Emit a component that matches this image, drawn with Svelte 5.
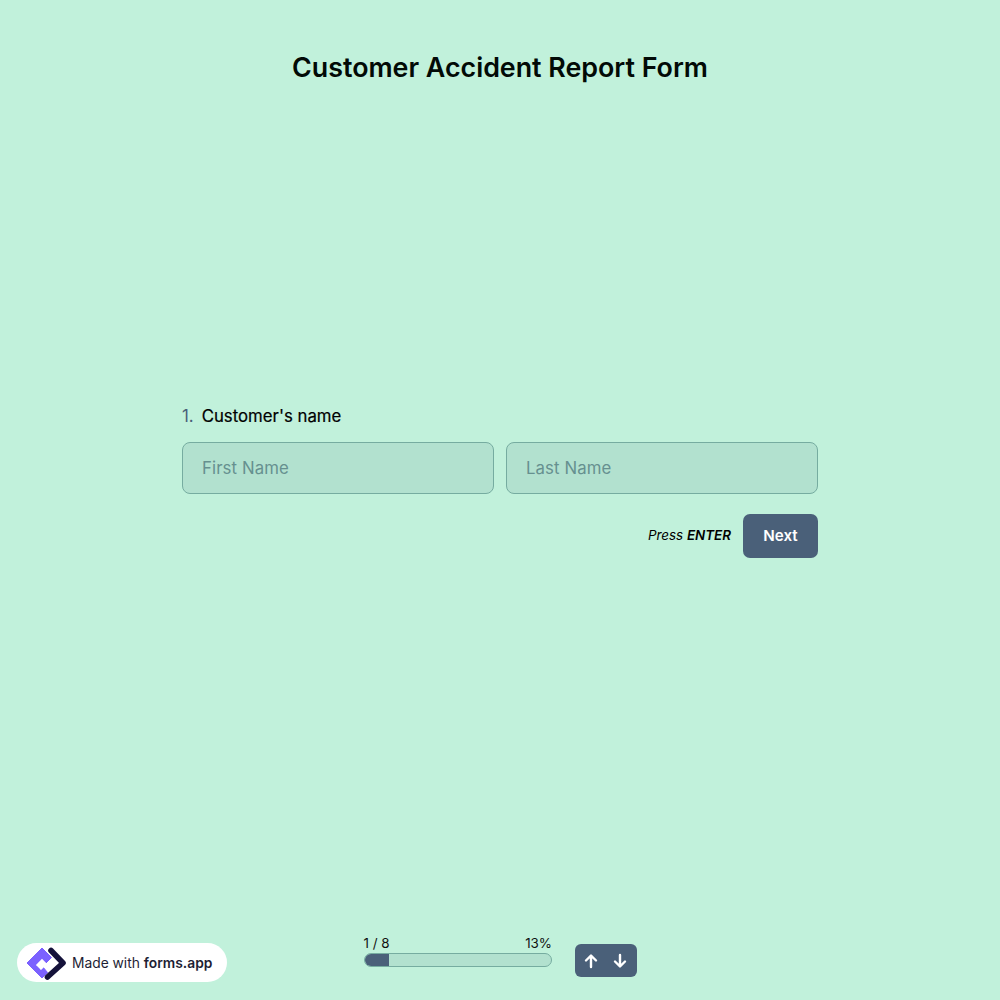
<script>
  const fields = ['First Name', 'Last Name'];
</script>

<div class="page">
  <header class="title">Customer Accident Report Form</header>

  <main class="stage">
    <section class="question">
      <div class="label"><span class="num">1.</span><span>Customer's name</span></div>
      <div class="fields">
        {#each fields as f}
          <input class="field" placeholder={f} />
        {/each}
      </div>
      <div class="actions">
        <span class="hint">Press <b>ENTER</b></span>
        <button class="next">Next</button>
      </div>
    </section>
  </main>

  <footer class="footer">
    <div class="brand">
      <svg class="logo" width="42" height="36" viewBox="0 0 42 36">
        <path d="M1 18 L16 3 L25.5 12.5 L20 18 L16.5 21.5 L21.5 27.5 L16 33 Z" fill="#7b61ff" stroke="#7b61ff" stroke-width="1" stroke-linejoin="round"/>
        <path d="M10.5 20.5 L16 15 L20 19 L14.5 24.5" fill="#fff" stroke="#fff" stroke-width="1.6"/>
        <path d="M25 5.5 L37 18 L21.5 32" fill="none" stroke="#14123a" stroke-width="5.6" stroke-linejoin="round" stroke-linecap="round"/>
      </svg>
      <span class="made">Made with <b>forms.app</b></span>
    </div>
    <div class="progress">
      <div class="ptext"><span>1 / 8</span><span>13%</span></div>
      <div class="track"><div class="fill" style="width: 13%"></div></div>
    </div>
    <div class="arrows">
      <svg width="16" height="16" viewBox="0 0 16 16"><path d="M8 14V3M3 7.5L8 2.5L13 7.5" fill="none" stroke="#fff" stroke-width="2.4" stroke-linecap="round" stroke-linejoin="round"/></svg>
      <svg width="16" height="16" viewBox="0 0 16 16"><path d="M8 2V13M3 8.5L8 13.5L13 8.5" fill="none" stroke="#fff" stroke-width="2.4" stroke-linecap="round" stroke-linejoin="round"/></svg>
    </div>
  </footer>
</div>

<style>
  :global(body) { margin: 0; background: #c1f1db; }
  .page {
    width: 1000px; height: 1000px; background: #c1f1db;
    display: flex; flex-direction: column;
    font-family: Inter, "Liberation Sans", sans-serif; color: #000;
  }
  .title {
    text-align: center; font-size: 26.8px; font-weight: 600; line-height: 32px;
    padding-top: 51px; color: #020a06;
  }
  .stage { flex: 1; display: flex; justify-content: center; padding-top: 322px; }
  .question { width: 636px; }
  .label { display: flex; gap: 8px; font-size: 16.8px; font-weight: 400; line-height: 22px; -webkit-text-stroke: 0.2px #000; }
  .num { color: #4a6079; -webkit-text-stroke: 0; }
  .fields { display: flex; gap: 12px; margin-top: 15px; }
  .field {
    flex: 1; min-width: 0; box-sizing: border-box; height: 52px; padding: 0 19px;
    background: #b2e1cf; border: 1px solid #76aca0; border-radius: 8px;
    font: 400 16.8px Inter, sans-serif; letter-spacing: 0.1px; color: #000; outline: none;
  }
  .field::placeholder { color: #66908f; opacity: 1; }
  .actions { display: flex; justify-content: flex-end; align-items: center; gap: 12px; margin-top: 20px; }
  .hint { font-size: 13.4px; font-style: italic; padding-bottom: 2px; }
  .hint b { font-weight: 600; }
  .next {
    width: 75px; height: 44px; border: 0; border-radius: 7px; background: #4a6079;
    color: #fff; font: 600 15.2px Inter, sans-serif; padding: 0 0 1px;
  }
  .footer { position: relative; height: 75px; }
  .brand {
    position: absolute; left: 17px; top: 18px; width: 210px; height: 39px;
    box-sizing: border-box; background: #fff; border-radius: 20px;
    display: flex; align-items: center;
  }
  .logo { margin-left: 9px; }
  .made { margin-left: 4px; font-size: 13.8px; color: #1e1e34; }
  .made b { font-weight: 600; }
  .progress { position: absolute; left: 363.5px; top: 10px; width: 188.5px; }
  .ptext { display: flex; justify-content: space-between; font-size: 13.4px; line-height: 16px; color: #111; }
  .track {
    margin-top: 2px; height: 14px; box-sizing: border-box; border: 1px solid #76aca0;
    border-radius: 7px; background: #b2e1cf; overflow: hidden;
  }
  .fill { height: 100%; background: #4a6079; }
  .arrows {
    position: absolute; left: 575px; top: 19px; width: 62px; height: 33px;
    background: #4a6079; border-radius: 6px; padding-right: 2px; box-sizing: border-box;
    display: flex; align-items: center; justify-content: center; gap: 13px;
  }
</style>
